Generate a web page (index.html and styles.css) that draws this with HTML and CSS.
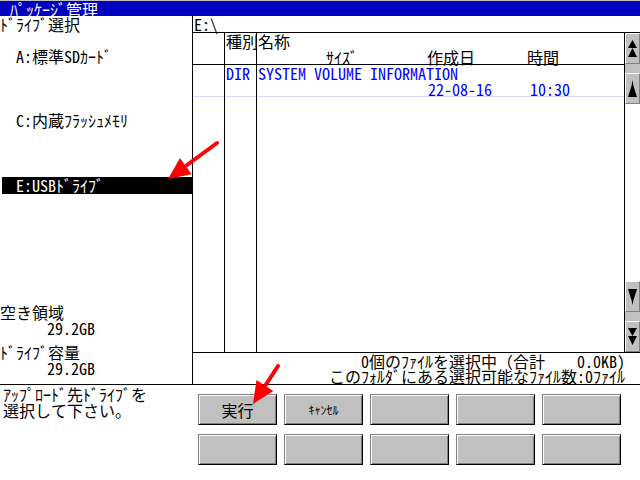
FILE: index.html
```html
<!DOCTYPE html>
<html lang="ja">
<head>
<meta charset="utf-8">
<title>ﾊﾟｯｹｰｼﾞ管理</title>
<link rel="stylesheet" href="styles.css">
</head>
<body>
<div class="screen">
  <div class="title">ﾊﾟｯｹｰｼﾞ管理</div>
  <div class="main">
    <div class="left">
      <div class="lbl">ﾄﾞﾗｲﾌﾞ選択</div>
      <div class="drive d-a">A:標準SDｶｰﾄﾞ</div>
      <div class="drive d-c">C:内蔵ﾌﾗｯｼｭﾒﾓﾘ</div>
      <div class="drive d-e">E:USBﾄﾞﾗｲﾌﾞ</div>
      <div class="info">
        <div class="lbl">空き領域</div>
        <div class="val">29.2GB</div>
        <div class="lbl cap">ﾄﾞﾗｲﾌﾞ容量</div>
        <div class="val">29.2GB</div>
      </div>
    </div>
    <div class="right">
      <div class="path">E:\</div>
      <div class="list">
        <div class="col c1"><div class="hd"></div><div class="row"></div></div>
        <div class="col c2"><div class="hd">種別</div><div class="row blue">DIR</div></div>
        <div class="col c3">
          <div class="hd">
            <div class="name">名称</div>
            <div class="sub"><span class="h1">ｻｲｽﾞ</span><span class="h2">作成日</span><span>時間</span></div>
          </div>
          <div class="row blue">
            <div class="name">SYSTEM VOLUME INFORMATION</div>
            <div class="sub"><span class="r1">22-08-16</span><span>10:30</span></div>
          </div>
        </div>
        <div class="scroll">
          <div class="sbtn"><svg width="13" height="29" viewBox="0 0 13 29"><path d="M6.5 6 L11 14 L2 14 Z M6.5 14 L11 23 L2 23 Z" fill="#000"/></svg></div>
          <div class="sgap"></div>
          <div class="sbtn"><svg width="13" height="29" viewBox="0 0 13 29"><path d="M6.5 6 L7.5 12 L11 23 L2 23 L5.5 12 Z" fill="#000"/></svg></div>
          <div class="strack"></div>
          <div class="sbtn"><svg width="13" height="29" viewBox="0 0 13 29"><path d="M2 7 L11 7 L7.5 18 L6.5 23 L5.5 18 Z" fill="#000"/></svg></div>
          <div class="sgap"></div>
          <div class="sbtn"><svg width="13" height="29" viewBox="0 0 13 29"><path d="M2 6 L11 6 L6.5 14 Z M2 14 L11 14 L6.5 23 Z" fill="#000"/></svg></div>
        </div>
      </div>
      <div class="status">
        <div class="sline">0個のﾌｧｲﾙを選択中（合計    0.0KB)</div>
        <div class="sline">このﾌｫﾙﾀﾞにある選択可能なﾌｧｲﾙ数:0ﾌｧｲﾙ</div>
      </div>
    </div>
  </div>
  <div class="bottom">
    <div class="msg"><div class="mline">ｱｯﾌﾟﾛｰﾄﾞ先ﾄﾞﾗｲﾌﾞを</div><div class="mline">選択して下さい。</div></div>
    <div class="btns">
      <div class="btn">実行</div>
      <div class="btn small">ｷｬﾝｾﾙ</div>
      <div class="btn"></div>
      <div class="btn"></div>
      <div class="btn"></div>
      <div class="btn"></div>
      <div class="btn"></div>
      <div class="btn"></div>
      <div class="btn"></div>
      <div class="btn"></div>
    </div>
  </div>
  <svg class="arrows" width="640" height="480" viewBox="0 0 640 480">
    <line x1="217" y1="143" x2="187" y2="165" stroke="#f00" stroke-width="4" stroke-linecap="round"/>
    <polygon points="168,179 191.6,174.3 180,158.1" fill="#f00"/>
    <line x1="278" y1="366" x2="265" y2="386" stroke="#f00" stroke-width="4" stroke-linecap="round"/>
    <polygon points="253,404 273.3,390.9 256.5,380.1" fill="#f00"/>
  </svg>
</div>
</body>
</html>
```

FILE: styles.css
```css
html, body {
  margin: 0;
  padding: 0;
  background: #fff;
}
.screen {
  position: relative;
  width: 640px;
  height: 480px;
  overflow: hidden;
  background: #fff;
  color: #000;
  font-family: "Noto Sans Mono CJK JP", "Noto Sans CJK JP", monospace;
  font-size: 16px;
  line-height: 16px;
}
.title {
  height: 15px;
  border-top: 1px solid #c0c0c0;
  background: #0000c0;
  color: #fff;
  padding-left: 10px;
  line-height: 16px;
  white-space: nowrap;
}
.main {
  display: flex;
  height: 368px;
  border-bottom: 1px solid #000;
}
.left {
  width: 192px;
  flex: 0 0 192px;
  border-right: 1px solid #000;
  white-space: nowrap;
}
.lbl {
  height: 16px;
}
.drive {
  height: 16px;
  padding-left: 16px;
}
.d-a { margin-top: 16px; }
.d-c { margin-top: 48px; }
.d-e {
  margin-top: 49px;
  margin-left: 2px;
  padding-left: 14px;
  height: 17px;
  line-height: 17px;
  background: #000;
  color: #fff;
}
.info {
  margin-top: 110px;
}
.val {
  height: 16px;
  padding-left: 47px;
}
.cap {
  margin-top: 8px;
}
.right {
  flex: 1;
  display: flex;
  flex-direction: column;
  min-width: 0;
}
.path {
  height: 16px;
  border-bottom: 1px solid #000;
  padding-left: 1px;
}
.list {
  display: flex;
  height: 319px;
}
.col {
  display: flex;
  flex-direction: column;
  white-space: nowrap;
}
.c1, .c2 {
  width: 31px;
  border-right: 1px solid #000;
}
.c2 .hd, .c2 .row {
  padding-left: 1px;
}
.c3 {
  flex: 1;
  min-width: 0;
}
.hd {
  height: 31px;
  border-bottom: 1px solid #000;
}
.row {
  height: 31px;
  border-bottom: 1px solid #d8d8ff;
}
.name {
  height: 16px;
  padding-left: 1px;
}
.sub {
  display: flex;
  height: 15px;
}
.h1 { margin-left: 69px; width: 101px; }
.h2 { width: 100px; }
.r1 { margin-left: 171px; width: 102px; }
.blue {
  color: #0000ff;
}
.scroll {
  width: 15px;
  flex: 0 0 15px;
  border-left: 1px solid #000;
  display: flex;
  flex-direction: column;
}
.sbtn {
  box-sizing: border-box;
  height: 31px;
  background: #c0c0c0;
  border-style: solid;
  border-width: 1px;
  border-color: #fff #808080 #808080 #fff;
  display: flex;
  align-items: center;
  justify-content: center;
}
.sbtn svg {
  display: block;
}
.sgap {
  height: 9px;
  background: #c0c0c0;
}
.strack {
  flex: 1;
  background: #fff;
}
.status {
  height: 31px;
  border-top: 1px solid #000;
  text-align: right;
  padding-right: 15px;
}
.sline {
  height: 15px;
  line-height: 16px;
  white-space: pre;
}
.sline + .sline {
  height: 16px;
}
.bottom {
  display: flex;
  height: 95px;
}
.msg {
  flex: 0 0 198px;
  box-sizing: border-box;
  padding: 1px 0 0 3px;
  white-space: nowrap;
}
.mline {
  height: 16px;
}
.btns {
  margin-top: 9px;
  display: grid;
  grid-template-columns: repeat(5, 79px);
  grid-auto-rows: 31px;
  column-gap: 7px;
  row-gap: 9px;
}
.btn {
  box-sizing: border-box;
  background: #c0c0c0;
  border-style: solid;
  border-width: 1px;
  border-color: #808080 #000 #000 #808080;
  box-shadow: inset 1px 1px #fff, inset -1px -1px #808080;
  display: flex;
  align-items: center;
  justify-content: center;
  white-space: nowrap;
}
.btn.small {
  font-size: 12px;
}
.arrows {
  position: absolute;
  left: 0;
  top: 0;
  pointer-events: none;
}
```
